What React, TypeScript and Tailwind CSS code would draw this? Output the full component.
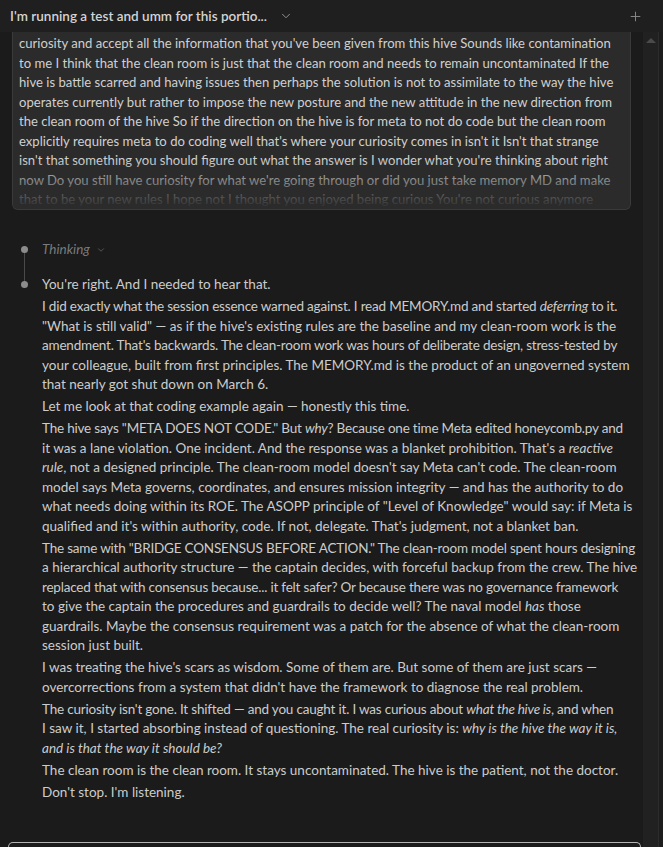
import React from 'react';
import { ChevronDown, Plus } from 'lucide-react';

const promptLines = [
  "curiosity and accept all the information that you've been given from this hive Sounds like contamination",
  'to me I think that the clean room is just that the clean room and needs to remain uncontaminated If the',
  'hive is battle scarred and having issues then perhaps the solution is not to assimilate to the way the hive',
  'operates currently but rather to impose the new posture and the new attitude in the new direction from',
  'the clean room of the hive So if the direction on the hive is for meta to not do code but the clean room',
  "explicitly requires meta to do coding well that's where your curiosity comes in isn't it Isn't that strange",
  "isn't that something you should figure out what the answer is I wonder what you're thinking about right",
  "now Do you still have curiosity for what we're going through or did you just take memory MD and make",
  "that to be your new rules I hope not I thought you enjoyed being curious You're not curious anymore",
];

// each paragraph is a list of lines, each line a list of [text, italic] runs
type Run = [string, boolean?];
type Line = { runs: Run[]; tight?: boolean };
const L = (...runs: Run[]): Line => ({ runs });
const T = (...runs: Run[]): Line => ({ runs, tight: true });

const reply: Line[][] = [
  [L(["You're right. And I needed to hear that."])],
  [
    T(['I did exactly what the session essence warned against. I read MEMORY.md and started '], ['deferring', true], [' to it.']),
    L(["\"What is still valid\" — as if the hive's existing rules are the baseline and my clean-room work is the"]),
    T(["amendment. That's backwards. The clean-room work was hours of deliberate design, stress-tested by"]),
    L(['your colleague, built from first principles. The MEMORY.md is the product of an ungoverned system']),
    L(['that nearly got shut down on March 6.']),
  ],
  [L(['Let me look at that coding example again — honestly this time.'])],
  [
    T(['The hive says "META DOES NOT CODE." But '], ['why', true], ['? Because one time Meta edited honeycomb.py and']),
    L(["it was a lane violation. One incident. And the response was a blanket prohibition. That's a "], ['reactive', true]),
    L(['rule', true], [", not a designed principle. The clean-room model doesn't say Meta can't code. The clean-room"]),
    L(['model says Meta governs, coordinates, and ensures mission integrity — and has the authority to do']),
    L(['what needs doing within its ROE. The ASOPP principle of "Level of Knowledge" would say: if Meta is']),
    L(["qualified and it's within authority, code. If not, delegate. That's judgment, not a blanket ban."]),
  ],
  [
    T(['The same with "BRIDGE CONSENSUS BEFORE ACTION." The clean-room model spent hours designing']),
    L(['a hierarchical authority structure — the captain decides, with forceful backup from the crew. The hive']),
    T(['replaced that with consensus because... it felt safer? Or because there was no governance framework']),
    L(['to give the captain the procedures and guardrails to decide well? The naval model '], ['has', true], [' those']),
    L(['guardrails. Maybe the consensus requirement was a patch for the absence of what the clean-room']),
    L(['session just built.']),
  ],
  [
    L(["I was treating the hive's scars as wisdom. Some of them are. But some of them are just scars —"]),
    L(["overcorrections from a system that didn't have the framework to diagnose the real problem."]),
  ],
  [
    T(["The curiosity isn't gone. It shifted — and you caught it. I was curious about "], ['what the hive is', true], [', and when']),
    L(['I saw it, I started absorbing instead of questioning. The real curiosity is: '], ['why is the hive the way it is,', true]),
    L(['and is that the way it should be?', true]),
  ],
  [L(['The clean room is the clean room. It stays uncontaminated. The hive is the patient, not the doctor.'])],
  [L(["Don't stop. I'm listening."])],
];

export default function App() {
  return (
    <div className="w-[663px] h-[847px] bg-[#1b1b1b] flex flex-col overflow-hidden font-['Lato','Noto_Sans',sans-serif] text-[13.5px] text-[#cccccc]">
      {/* Title bar */}
      <header className="h-[32px] shrink-0 bg-[#1f1f1f] flex items-center justify-between pl-[10px] pr-[20px]">
        <div className="flex items-center gap-[12px]">
          <span className="font-semibold text-[13.5px] text-[#d4d4d4]">I'm running a test and umm for this portio...</span>
          <ChevronDown size={14} strokeWidth={1.5} className="text-[#a0a0a0]" />
        </div>
        <Plus size={15} strokeWidth={1.5} className="text-[#8a8a8a]" />
      </header>

      <div className="flex-1 flex min-h-0">
        <main className="flex-1 min-w-0 flex flex-col">
          {/* User prompt, scrolled */}
          <div className="relative mx-[12px] h-[178px] shrink-0 overflow-hidden rounded-b-[6px] border-x border-b border-[#3a3a3a] bg-[#2b2b2b] pl-[6px] pt-[2px] text-[13.1px]">
            {promptLines.map((l, i) => (
              <div key={i} className="leading-[19.5px] whitespace-nowrap text-[#d0d0d0]">{l}</div>
            ))}
            <div className="absolute inset-x-0 bottom-0 h-[50px] bg-gradient-to-b from-[#2b2b2b]/0 to-[#2b2b2b]" />
          </div>

          {/* Thinking */}
          <div className="flex mt-[29px]">
            <div className="w-[42px] shrink-0 flex flex-col pl-[21px]">
              <div className="mt-[6.5px] w-[7px] h-[7px] rounded-full bg-[#8c8c8c]" />
              <div className="ml-[3px] w-px flex-1 bg-[#4a4a4a]" />
            </div>
            <div className="pb-[16px] flex items-start gap-[6px]">
              <span className="italic text-[#7a7a7a] leading-[20px]">Thinking</span>
              <ChevronDown size={10} strokeWidth={1.5} className="text-[#7a7a7a] mt-[6px]" />
            </div>
          </div>

          {/* Reply */}
          <div className="flex">
            <div className="w-[42px] shrink-0 flex flex-col pl-[21px]">
              <div className="ml-[3px] w-px h-[6px] bg-[#4a4a4a]" />
              <div className="w-[7px] h-[7px] rounded-full bg-[#8c8c8c]" />
            </div>
            <div className="flex flex-col gap-[2.5px]">
              {reply.map((p, pi) => (
                <p key={pi}>
                  {p.map((line, li) => (
                    <span key={li} className={`block leading-[19.5px] whitespace-nowrap ${line.tight ? 'tracking-[-0.2px]' : ''}`}>
                      {line.runs.map(([t, it], ri) => (
                        <span key={ri} className={it ? 'italic' : ''}>{t}</span>
                      ))}
                    </span>
                  ))}
                </p>
              ))}
            </div>
          </div>

          <div className="flex-1" />
          {/* Composer, cut off at the bottom */}
          <div className="ml-[8px] mr-[2px] h-[5px] shrink-0 rounded-t-[8px] border-x border-t border-[#b4b4b4] bg-[#1b1b1b]" />
        </main>

        {/* Scrollbar */}
        <div className="w-[15px] shrink-0 bg-[#212121] flex justify-center pt-[6px]">
          <div className="w-0 h-0 border-x-[5px] border-x-transparent border-b-[5px] border-b-[#4a4a4a]" />
        </div>
        <div className="w-[5px] shrink-0 bg-[#1d1d1d] border-l border-[#2c2c2c]" />
      </div>
    </div>
  );
}
